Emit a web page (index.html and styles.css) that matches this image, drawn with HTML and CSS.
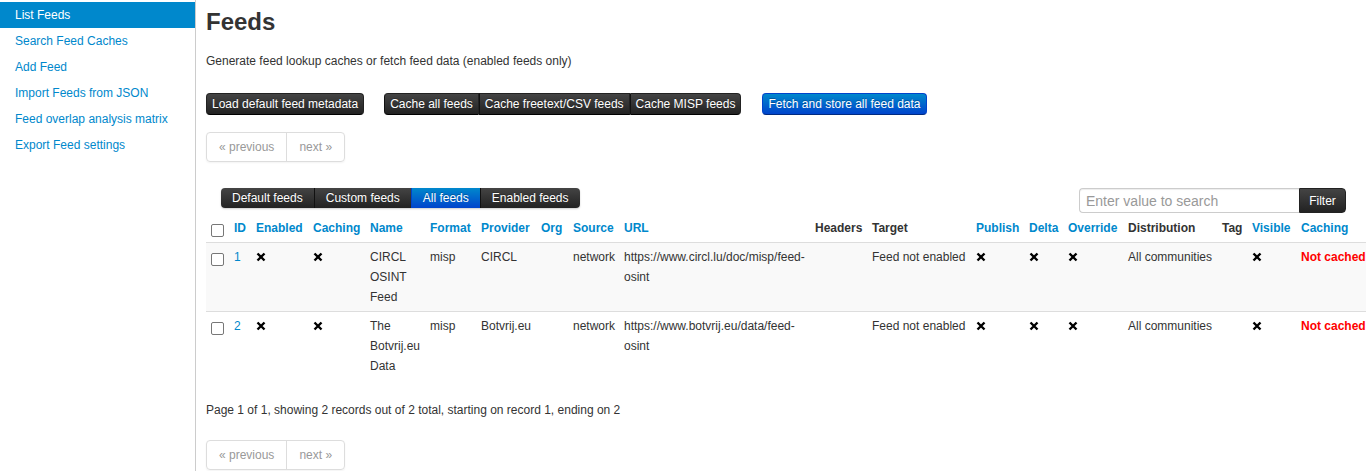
FILE: index.html
```html
<!DOCTYPE html>
<html>
<head>
<meta charset="utf-8">
<title>Feeds</title>
<link rel="stylesheet" href="styles.css">
</head>
<body>
<div class="layout">
  <aside class="sidebar">
    <ul class="side-nav">
      <li class="active"><a href="#">List Feeds</a></li>
      <li><a href="#">Search Feed Caches</a></li>
      <li><a href="#">Add Feed</a></li>
      <li><a href="#">Import Feeds from JSON</a></li>
      <li><a href="#">Feed overlap analysis matrix</a></li>
      <li><a href="#">Export Feed settings</a></li>
    </ul>
  </aside>
  <main class="main">
    <h2 class="title">Feeds</h2>
    <p class="desc">Generate feed lookup caches or fetch feed data (enabled feeds only)</p>
    <div class="actions">
      <a class="btn btn-inverse" href="#">Load default feed metadata</a>
      <div class="btn-group">
        <a class="btn btn-inverse" href="#">Cache all feeds</a>
        <a class="btn btn-inverse" href="#">Cache freetext/CSV feeds</a>
        <a class="btn btn-inverse" href="#">Cache MISP feeds</a>
      </div>
      <a class="btn btn-primary" href="#">Fetch and store all feed data</a>
    </div>
    <ul class="pager">
      <li>« previous</li>
      <li>next »</li>
    </ul>
    <div class="toolbar">
      <div class="tabs">
        <a class="tab" href="#">Default feeds</a>
        <a class="tab" href="#">Custom feeds</a>
        <a class="tab active" href="#">All feeds</a>
        <a class="tab" href="#">Enabled feeds</a>
      </div>
      <div class="search">
        <input class="search-input" type="text" placeholder="Enter value to search">
        <button class="search-btn">Filter</button>
      </div>
    </div>
    <table class="feeds">
      <colgroup>
        <col class="c-cb"><col class="c-id"><col class="c-en"><col class="c-ca"><col class="c-name">
        <col class="c-fmt"><col class="c-prov"><col class="c-org"><col class="c-src"><col class="c-url">
        <col class="c-hdr"><col class="c-tgt"><col class="c-pub"><col class="c-delta"><col class="c-ovr">
        <col class="c-dist"><col class="c-tag"><col class="c-vis"><col class="c-cach">
      </colgroup>
      <thead>
        <tr>
          <th><span class="cb"></span></th>
          <th><a href="#">ID</a></th>
          <th><a href="#">Enabled</a></th>
          <th><a href="#">Caching</a></th>
          <th><a href="#">Name</a></th>
          <th><a href="#">Format</a></th>
          <th><a href="#">Provider</a></th>
          <th><a href="#">Org</a></th>
          <th><a href="#">Source</a></th>
          <th><a href="#">URL</a></th>
          <th>Headers</th>
          <th>Target</th>
          <th><a href="#">Publish</a></th>
          <th><a href="#">Delta</a></th>
          <th><a href="#">Override</a></th>
          <th>Distribution</th>
          <th>Tag</th>
          <th><a href="#">Visible</a></th>
          <th><a href="#">Caching</a></th>
        </tr>
      </thead>
      <tbody>
        <tr class="odd">
          <td><span class="cb"></span></td>
          <td><a href="#">1</a></td>
          <td><svg class="x" viewBox="0 0 10 10"><path d="M1.5 1.5L8.5 8.5M8.5 1.5L1.5 8.5"/></svg></td>
          <td><svg class="x" viewBox="0 0 10 10"><path d="M1.5 1.5L8.5 8.5M8.5 1.5L1.5 8.5"/></svg></td>
          <td>CIRCL OSINT Feed</td>
          <td>misp</td>
          <td>CIRCL</td>
          <td></td>
          <td>network</td>
          <td>https://www.circl.lu/doc/misp/feed-osint</td>
          <td></td>
          <td>Feed not enabled</td>
          <td><svg class="x" viewBox="0 0 10 10"><path d="M1.5 1.5L8.5 8.5M8.5 1.5L1.5 8.5"/></svg></td>
          <td><svg class="x" viewBox="0 0 10 10"><path d="M1.5 1.5L8.5 8.5M8.5 1.5L1.5 8.5"/></svg></td>
          <td><svg class="x" viewBox="0 0 10 10"><path d="M1.5 1.5L8.5 8.5M8.5 1.5L1.5 8.5"/></svg></td>
          <td class="nowrap">All communities</td>
          <td></td>
          <td><svg class="x" viewBox="0 0 10 10"><path d="M1.5 1.5L8.5 8.5M8.5 1.5L1.5 8.5"/></svg></td>
          <td class="notcached">Not cached</td>
        </tr>
        <tr>
          <td><span class="cb"></span></td>
          <td><a href="#">2</a></td>
          <td><svg class="x" viewBox="0 0 10 10"><path d="M1.5 1.5L8.5 8.5M8.5 1.5L1.5 8.5"/></svg></td>
          <td><svg class="x" viewBox="0 0 10 10"><path d="M1.5 1.5L8.5 8.5M8.5 1.5L1.5 8.5"/></svg></td>
          <td>The Botvrij.eu Data</td>
          <td>misp</td>
          <td>Botvrij.eu</td>
          <td></td>
          <td>network</td>
          <td>https://www.botvrij.eu/data/feed-osint</td>
          <td></td>
          <td>Feed not enabled</td>
          <td><svg class="x" viewBox="0 0 10 10"><path d="M1.5 1.5L8.5 8.5M8.5 1.5L1.5 8.5"/></svg></td>
          <td><svg class="x" viewBox="0 0 10 10"><path d="M1.5 1.5L8.5 8.5M8.5 1.5L1.5 8.5"/></svg></td>
          <td><svg class="x" viewBox="0 0 10 10"><path d="M1.5 1.5L8.5 8.5M8.5 1.5L1.5 8.5"/></svg></td>
          <td class="nowrap">All communities</td>
          <td></td>
          <td><svg class="x" viewBox="0 0 10 10"><path d="M1.5 1.5L8.5 8.5M8.5 1.5L1.5 8.5"/></svg></td>
          <td class="notcached">Not cached</td>
        </tr>
      </tbody>
    </table>
    <p class="counter">Page 1 of 1, showing 2 records out of 2 total, starting on record 1, ending on 2</p>
    <ul class="pager pager-bottom">
      <li>« previous</li>
      <li>next »</li>
    </ul>
  </main>
</div>
</body>
</html>
```

FILE: styles.css
```css
* { box-sizing: border-box; }
html, body { margin: 0; padding: 0; background: #fff; overflow: hidden; }
body {
  font-family: "Liberation Sans", Arial, Helvetica, sans-serif;
  font-size: 12px;
  line-height: 20px;
  color: #333;
}
a { text-decoration: none; color: #0088cc; }

.layout { display: flex; align-items: stretch; min-height: 471px; }

.sidebar {
  width: 196px;
  flex: 0 0 196px;
  border-right: 1px solid #ccc;
  padding-top: 2px;
}
.side-nav { list-style: none; margin: 0; padding: 0; }
.side-nav li a {
  display: block;
  height: 26px;
  line-height: 26px;
  padding-left: 15px;
  color: #0088cc;
}
.side-nav li.active a { background: #0088cc; color: #fff; }

.main { flex: 1; padding: 0 20px 0 10px; min-width: 0; }

.title {
  margin: 2px 0 0;
  font-size: 24px;
  line-height: 40px;
  font-weight: bold;
  color: #333;
}
.desc { margin: 9px 0 0; }

.actions { display: flex; align-items: center; margin-top: 22px; height: 22px; }
.actions > .btn-group { margin-left: 20px; }
.actions > .btn-primary { margin-left: 21px; }
.btn-group { display: flex; }

.btn {
  display: inline-block;
  height: 22px;
  line-height: 20px;
  padding: 0 5px;
  font-size: 12px;
  border-radius: 4px;
  border: 1px solid;
  color: #fff;
  white-space: nowrap;
  text-shadow: 0 -1px 0 rgba(0,0,0,0.25);
}
.btn-inverse {
  background: linear-gradient(#444, #222);
  border-color: #222 #222 #000;
}
.btn-primary {
  background: linear-gradient(#0088cc, #0044cc);
  border-color: #0044cc #0044cc #002a80;
}
.btn-group .btn { border-radius: 0; border-left-color: #111; }
.btn-group .btn:first-child { border-radius: 4px 0 0 4px; }
.btn-group .btn:last-child { border-radius: 0 4px 4px 0; }

.pager {
  list-style: none;
  margin: 17px 0 0;
  padding: 0;
  display: inline-flex;
  border: 1px solid #ddd;
  border-radius: 4px;
  box-shadow: 0 1px 2px rgba(0,0,0,0.05);
}
.pager-bottom { margin-top: 20px; }
.pager li {
  height: 28px;
  line-height: 28px;
  padding: 0 12px;
  color: #999;
}
.pager li + li { border-left: 1px solid #ddd; }

.toolbar {
  display: flex;
  justify-content: space-between;
  align-items: flex-start;
  margin-top: 26px;
}
.tabs {
  display: flex;
  margin-left: 15px;
  border-radius: 4px;
  overflow: hidden;
  background: linear-gradient(#444, #222);
  box-shadow: 0 1px 2px rgba(0,0,0,0.2);
}
.tab {
  display: block;
  height: 20px;
  line-height: 20px;
  padding: 0 11px;
  color: #fff;
  border-left: 1px solid #111;
  text-shadow: 0 -1px 0 rgba(0,0,0,0.25);
}
.tab:first-child { border-left: none; }
.tab.active { background: linear-gradient(#0088cc, #0044cc); border-left-color: #0044cc; }

.search { display: flex; }
.search-input {
  width: 220px;
  height: 25px;
  border: 1px solid #ccc;
  border-right: none;
  border-radius: 4px 0 0 4px;
  padding: 0 6px;
  font-family: inherit;
  font-size: 14px;
  color: #555;
  box-shadow: inset 0 1px 1px rgba(0,0,0,0.075);
}
.search-input::placeholder { color: #999; }
.search-btn {
  height: 25px;
  width: 47px;
  border: 1px solid #222;
  border-radius: 0 4px 4px 0;
  background: linear-gradient(#444, #222);
  color: #fff;
  font-family: inherit;
  font-size: 12px;
  padding: 0;
}

.feeds {
  table-layout: fixed;
  border-collapse: collapse;
  width: 1172px;
  margin-top: 1px;
}
.feeds th, .feeds td {
  padding: 4px 5px;
  text-align: left;
  line-height: 20px;
  vertical-align: top;
}
.feeds th {
  font-weight: bold;
  vertical-align: bottom;
  color: #333;
  white-space: nowrap;
}
.feeds th a { color: #0088cc; }
.feeds td { border-top: 1px solid #ddd; }
.feeds tr.odd td { background: #f9f9f9; }
.feeds td a { color: #0088cc; }
.feeds td.nowrap { white-space: nowrap; }

.c-cb { width: 23px; }
.c-id { width: 22px; }
.c-en { width: 57px; }
.c-ca { width: 57px; }
.c-name { width: 60px; }
.c-fmt { width: 51px; }
.c-prov { width: 60px; }
.c-org { width: 32px; }
.c-src { width: 51px; }
.c-url { width: 191px; }
.c-hdr { width: 57px; }
.c-tgt { width: 104px; }
.c-pub { width: 53px; }
.c-delta { width: 39px; }
.c-ovr { width: 60px; }
.c-dist { width: 94px; }
.c-tag { width: 30px; }
.c-vis { width: 49px; }
.c-cach { width: 82px; }

.cb {
  display: inline-block;
  width: 13px;
  height: 13px;
  border: 1px solid #777;
  border-radius: 2px;
  background: #fff;
  vertical-align: middle;
  margin-top: 3px;
}
.x {
  width: 10px;
  height: 10px;
  vertical-align: -1px;
  stroke: #000;
  stroke-width: 2.4;
  fill: none;
}
.notcached { color: #ff0000; font-weight: bold; white-space: nowrap; }

.counter { margin: 20px 0 0; }
```
